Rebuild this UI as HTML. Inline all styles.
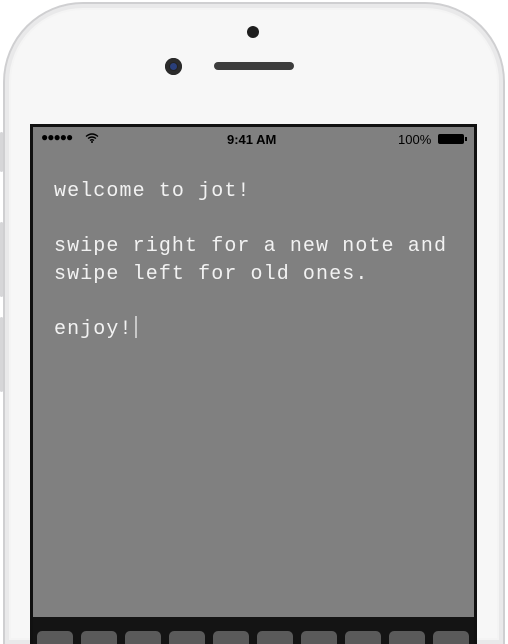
<!DOCTYPE html>
<html><head><meta charset="utf-8"><style>
html,body{margin:0;width:508px;height:644px;overflow:hidden}
body{background:#fff;position:relative;font-family:"Liberation Sans",sans-serif}
.wrap{position:absolute;left:0;top:0;width:508px;height:644px;overflow:hidden}
.phone{position:absolute;left:3px;top:2px;width:498px;height:642px;border-radius:80px 80px 0 0;background:#f7f7f7;border:2px solid #cfcfd1;border-bottom:none;box-shadow:inset 0 0 0 4px #e9e9ea,inset 0 0 0 6px #f4f4f4;box-sizing:border-box;width:502px}
.btn{position:absolute;left:0;width:3px;background:#d6d6d8;border-radius:2px}
.screen{position:absolute;left:30px;top:124px;width:447px;height:520px;background:#111}
.gray{position:absolute;left:3px;top:3px;width:441px;height:490px;background:#808080}
.kb{position:absolute;left:3px;top:493px;width:441px;height:27px;background:#141414;overflow:hidden}
.key{position:absolute;top:14px;width:36px;height:13px;border-radius:5px 5px 0 0;background:#5a5a5a}
.sb{position:absolute;top:5px;font-size:13px;color:#000}
.txt{position:absolute;left:21px;top:51px;font-family:"Liberation Mono",monospace;font-size:20px;letter-spacing:1.1px;line-height:27.5px;color:#f2f2f2;white-space:pre}
.cur{display:inline-block;width:2px;height:22px;background:#c8c8c8;vertical-align:-4px;margin-left:2px}
</style></head><body><div class="wrap">
<div class="phone"></div>
<div class="btn" style="top:132px;height:40px"></div>
<div class="btn" style="top:222px;height:75px"></div>
<div class="btn" style="top:317px;height:75px"></div>
<div style="position:absolute;left:247px;top:26px;width:12px;height:12px;border-radius:50%;background:#1e1e1e"></div>
<div style="position:absolute;left:165px;top:58px;width:17px;height:17px;border-radius:50%;background:#222;box-shadow:inset 0 0 0 4px #2b2b2b"><div style="position:absolute;left:5px;top:5px;width:7px;height:7px;border-radius:50%;background:#2a3f7a"></div></div>
<div style="position:absolute;left:214px;top:62px;width:80px;height:8px;border-radius:4px;background:#3d3d3d"></div>
<div class="screen">
<div class="gray">
<div class="sb" style="left:8px;top:3px;font-size:12px;letter-spacing:-1px">●●●●●</div>
<svg style="position:absolute;left:52px;top:6px" width="14" height="10" viewBox="0 0 14 10"><path d="M1 3.5Q7-1.5 13 3.5M3 5.5Q7 2.5 11 5.5M5 7.5Q7 6 9 7.5" stroke="#000" stroke-width="1.4" fill="none"/><circle cx="7" cy="9" r="1" fill="#000"/></svg>
<div class="sb" style="left:194px;font-weight:bold">9:41 AM</div>
<div class="sb" style="left:365px">100%</div>
<div style="position:absolute;left:405px;top:7px;width:26px;height:10px;background:#000;border-radius:2px"></div>
<div style="position:absolute;left:432px;top:10px;width:2px;height:4px;background:#000"></div>
<div class="txt">welcome to jot!

swipe right for a new note and
swipe left for old ones.

enjoy!<span class="cur"></span></div>
</div>
<div class="kb">
<div class="key" style="left:4px"></div><div class="key" style="left:48px"></div><div class="key" style="left:92px"></div><div class="key" style="left:136px"></div><div class="key" style="left:180px"></div><div class="key" style="left:224px"></div><div class="key" style="left:268px"></div><div class="key" style="left:312px"></div><div class="key" style="left:356px"></div><div class="key" style="left:400px"></div>
</div>
</div>
</div></body></html>
